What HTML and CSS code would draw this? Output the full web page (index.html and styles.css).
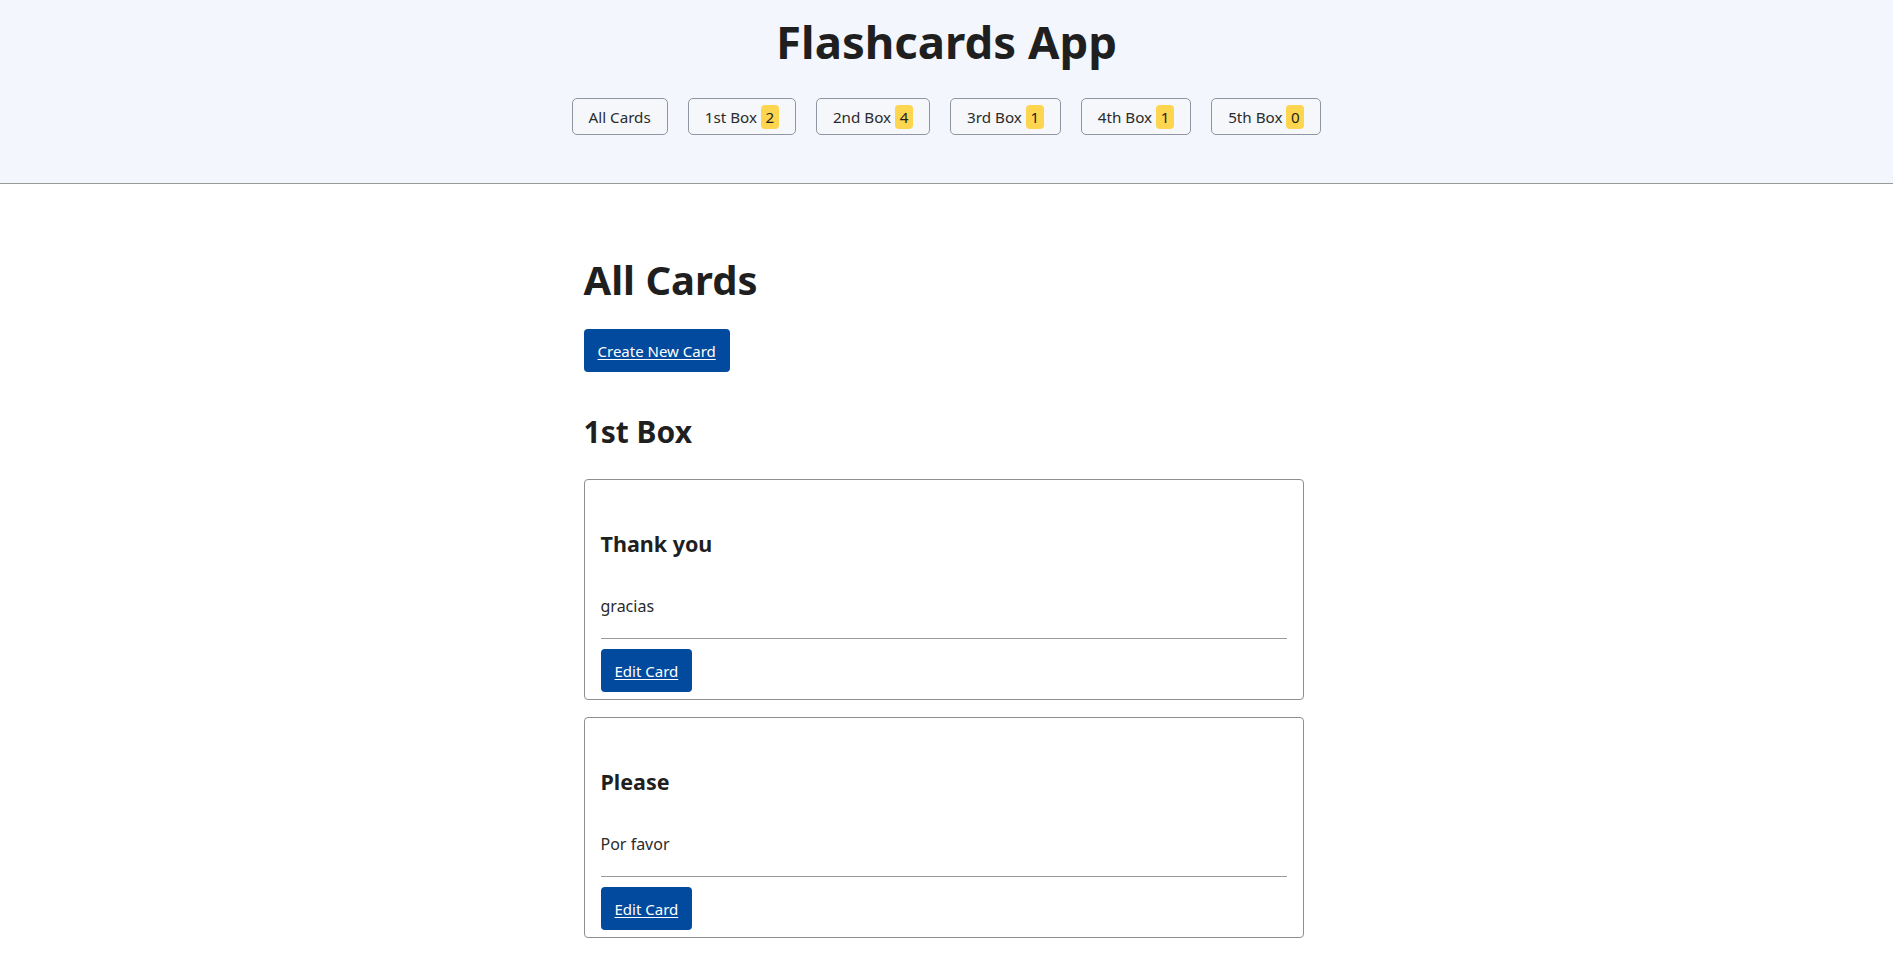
FILE: index.html
```html
<!DOCTYPE html>
<html lang="en">
<head>
<meta charset="utf-8">
<title>Flashcards App</title>
<link rel="stylesheet" href="styles.css">
</head>
<body>
<header class="header">
  <h1 class="app-title">Flashcards App</h1>
  <nav class="nav">
    <button class="nav-btn">All Cards</button>
    <button class="nav-btn">1st Box <span class="badge">2</span></button>
    <button class="nav-btn">2nd Box <span class="badge">4</span></button>
    <button class="nav-btn">3rd Box <span class="badge">1</span></button>
    <button class="nav-btn">4th Box <span class="badge">1</span></button>
    <button class="nav-btn">5th Box <span class="badge">0</span></button>
  </nav>
</header>
<main class="container">
  <h1 class="page-title">All Cards</h1>
  <a class="btn-primary" href="#">Create New Card</a>
  <h2 class="box-title">1st Box</h2>
  <div class="card">
    <h3 class="card-front">Thank you</h3>
    <p class="card-back">gracias</p>
    <hr class="card-divider">
    <a class="btn-primary btn-edit" href="#">Edit Card</a>
  </div>
  <div class="card">
    <h3 class="card-front">Please</h3>
    <p class="card-back">Por favor</p>
    <hr class="card-divider">
    <a class="btn-primary btn-edit" href="#">Edit Card</a>
  </div>
</main>
</body>
</html>
```

FILE: styles.css
```css
* { box-sizing: border-box; }

html, body {
  margin: 0;
  padding: 0;
  background: #ffffff;
  color: #1f1f1f;
  font-family: "Noto Sans", "Open Sans", sans-serif;
}

.header {
  background: #f3f6fc;
  border-bottom: 1px solid #9a9a9a;
  height: 184px;
  padding-top: 12px;
  text-align: center;
}

.app-title {
  margin: 0;
  font-size: 45.5px;
  line-height: 58px;
  font-weight: 700;
  color: #1f1f1f;
}

.nav {
  display: flex;
  justify-content: center;
  gap: 20px;
  margin-top: 28px;
}

.nav-btn {
  height: 37px;
  padding: 0 16px;
  border: 1px solid #8f96a1;
  border-radius: 5px;
  background: #f5f7fb;
  font-family: "Noto Sans", "Open Sans", sans-serif;
  font-size: 15.2px;
  color: #2b2b2b;
  display: flex;
  align-items: center;
  gap: 4px;
}

.badge {
  background: #fdd54f;
  border-radius: 4px;
  padding: 2px 4px;
  min-width: 18px;
  line-height: 20px;
  color: #1f1f1f;
}

.container {
  width: 720px;
  margin: 0 auto;
  padding-bottom: 40px;
  position: relative;
  left: -3px;
}

.page-title {
  margin: 69px 0 0;
  font-size: 40px;
  line-height: 54px;
  font-weight: 700;
}

.btn-primary {
  display: inline-flex;
  align-items: center;
  height: 43px;
  padding: 0 14px;
  margin-top: 22px;
  background: #014a9d;
  color: #ffffff;
  border-radius: 4px;
  font-size: 15px;
  text-decoration: underline;
  text-underline-offset: 2px;
}

.box-title {
  margin: 41px 0 0;
  font-size: 30px;
  line-height: 37px;
  font-weight: 700;
}

.card {
  border: 1px solid #8f8f8f;
  border-radius: 4px;
  padding: 0 16px 7px;
  margin-top: 29px;
}

.card + .card {
  margin-top: 17px;
}

.card-front {
  margin: 50px 0 0;
  font-size: 21.5px;
  line-height: 28px;
  font-weight: 700;
}

.card-back {
  margin: 36px 0 0;
  font-size: 16px;
  line-height: 24px;
  color: #2a2a2a;
}

.card-divider {
  margin: 20px 0 0;
  border: 0;
  border-top: 1px solid #9a9a9a;
  height: 0;
}

.btn-edit {
  margin-top: 10px;
}
```
